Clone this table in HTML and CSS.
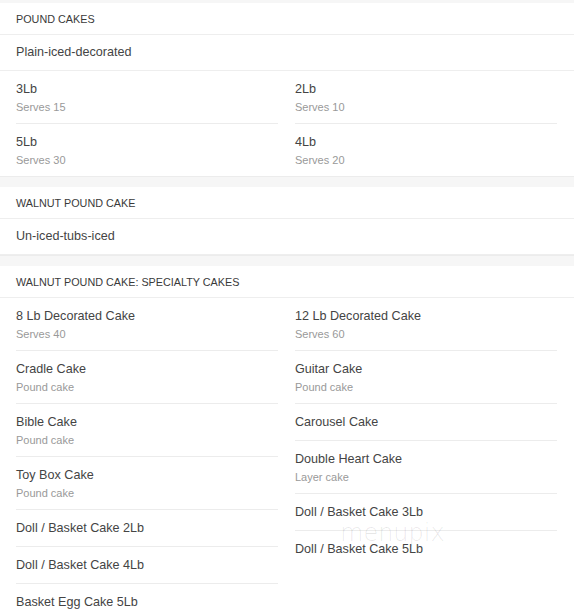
FILE: index.html
```html
<!DOCTYPE html>
<html>
<head>
<meta charset="utf-8">
<link rel="stylesheet" href="styles.css">
</head>
<body>
<div class="page">
  <div class="band band-top"></div>
  <section class="section">
    <div class="sec-head">POUND CAKES</div>
    <div class="sec-desc">Plain-iced-decorated</div>
    <div class="cols">
      <div class="col">
        <div class="item"><div class="title">3Lb</div><div class="sub">Serves 15</div></div>
        <div class="item"><div class="title">5Lb</div><div class="sub">Serves 30</div></div>
      </div>
      <div class="col">
        <div class="item"><div class="title">2Lb</div><div class="sub">Serves 10</div></div>
        <div class="item"><div class="title">4Lb</div><div class="sub">Serves 20</div></div>
      </div>
    </div>
  </section>
  <div class="band"></div>
  <section class="section">
    <div class="sec-head">WALNUT POUND CAKE</div>
    <div class="sec-desc">Un-iced-tubs-iced</div>
  </section>
  <div class="band"></div>
  <section class="section">
    <div class="sec-head">WALNUT POUND CAKE: SPECIALTY CAKES</div>
    <div class="cols">
      <div class="col">
        <div class="item"><div class="title">8 Lb Decorated Cake</div><div class="sub">Serves 40</div></div>
        <div class="item"><div class="title">Cradle Cake</div><div class="sub">Pound cake</div></div>
        <div class="item"><div class="title">Bible Cake</div><div class="sub">Pound cake</div></div>
        <div class="item"><div class="title">Toy Box Cake</div><div class="sub">Pound cake</div></div>
        <div class="item"><div class="title">Doll / Basket Cake 2Lb</div></div>
        <div class="item"><div class="title">Doll / Basket Cake 4Lb</div></div>
        <div class="item"><div class="title">Basket Egg Cake 5Lb</div></div>
      </div>
      <div class="col">
        <div class="item"><div class="title">12 Lb Decorated Cake</div><div class="sub">Serves 60</div></div>
        <div class="item"><div class="title">Guitar Cake</div><div class="sub">Pound cake</div></div>
        <div class="item"><div class="title">Carousel Cake</div></div>
        <div class="item"><div class="title">Double Heart Cake</div><div class="sub">Layer cake</div></div>
        <div class="item"><div class="title">Doll / Basket Cake 3Lb</div></div>
        <div class="item"><div class="title">Doll / Basket Cake 5Lb</div></div>
      </div>
    </div>
  </section>
  <div class="watermark">menupix</div>
</div>
</body>
</html>
```

FILE: styles.css
```css
html, body {
  margin: 0;
  padding: 0;
  background: #fff;
}
.page {
  position: relative;
  width: 574px;
  height: 616px;
  overflow: hidden;
  font-family: "Liberation Sans", Arial, sans-serif;
  color: #444;
}
.band {
  height: 10px;
  background: #f6f6f6;
  border-top: 1px solid #ececec;
}
.band-top {
  height: 3px;
  border-top: 0;
}
.sec-head {
  height: 31px;
  line-height: 32px;
  padding: 0 16px;
  font-size: 10.8px;
  color: #3a3a3a;
  border-bottom: 1px solid #eeeeee;
}
.sec-desc {
  height: 35px;
  line-height: 35px;
  padding: 0 16px;
  font-size: 12.6px;
  color: #444;
  border-bottom: 1px solid #eeeeee;
}
.cols {
  display: flex;
  gap: 17px;
  padding: 0 17px 0 16px;
}
.col {
  flex: 1;
  display: flex;
  flex-direction: column;
}
.item {
  padding: 10px 0 9px;
  border-bottom: 1px solid #ececec;
}
.item:last-child {
  border-bottom: 0;
}
.title {
  font-size: 12.6px;
  line-height: 17px;
  color: #444;
}
.sub {
  margin-top: 2px;
  font-size: 11px;
  line-height: 14px;
  color: #999;
}
.watermark {
  position: absolute;
  left: 340px;
  top: 519px;
  font-family: "DejaVu Sans", sans-serif;
  font-weight: 200;
  font-size: 24px;
  color: rgba(0, 0, 0, 0.09);
}
```
